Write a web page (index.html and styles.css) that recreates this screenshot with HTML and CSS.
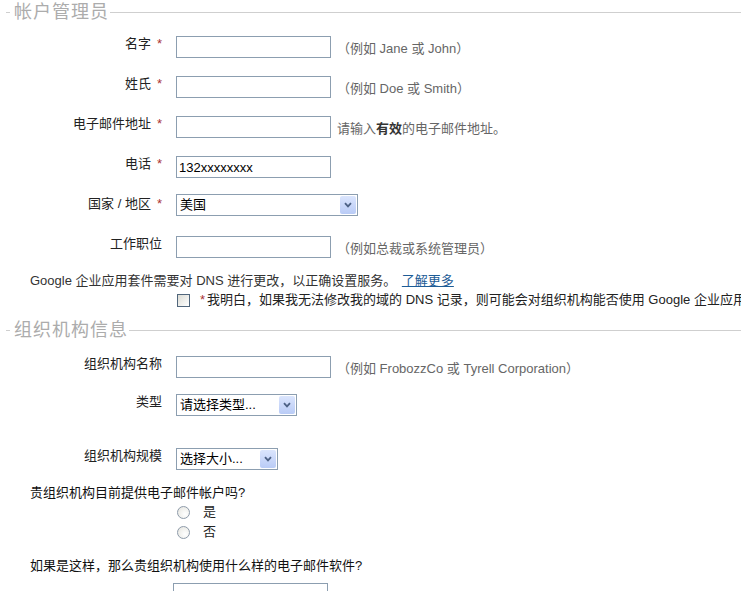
FILE: index.html
```html
<!DOCTYPE html>
<html lang="zh-CN">
<head>
  <meta charset="UTF-8">
  <title>帐户管理员</title>
  <link rel="stylesheet" href="styles.css">
</head>
<body>
  <div class="page">

    <h2 class="section-title"><span>帐户管理员</span></h2>
    <div class="fields">
      <div class="row">
        <label class="label" for="first-name">名字<span class="req">*</span></label>
        <input class="text" id="first-name" type="text">
        <span class="hint">（例如 Jane 或 John）</span>
      </div>
      <div class="row">
        <label class="label" for="last-name">姓氏<span class="req">*</span></label>
        <input class="text" id="last-name" type="text">
        <span class="hint">（例如 Doe 或 Smith）</span>
      </div>
      <div class="row">
        <label class="label" for="email">电子邮件地址<span class="req">*</span></label>
        <input class="text" id="email" type="text">
        <span class="hint">请输入<b>有效</b>的电子邮件地址。</span>
      </div>
      <div class="row">
        <label class="label" for="phone">电话<span class="req">*</span></label>
        <input class="text" id="phone" type="text" value="132xxxxxxxx">
      </div>
      <div class="row">
        <label class="label" for="country">国家 / 地区<span class="req">*</span></label>
        <span class="select select-country">
          <select id="country"><option>美国</option></select>
          <span class="select-btn"><svg width="8" height="6" viewBox="0 0 8 6"><path d="M1 1.2 L4 4.4 L7 1.2" /></svg></span>
        </span>
      </div>
      <div class="row row-last">
        <label class="label" for="job">工作职位</label>
        <input class="text" id="job" type="text">
        <span class="hint">（例如总裁或系统管理员）</span>
      </div>
    </div>

    <p class="note">Google 企业应用套件需要对 DNS 进行更改，以正确设置服务。 <a href="#">了解更多</a></p>
    <div class="agree">
      <input class="check" type="checkbox" id="agree">
      <label for="agree"><span class="req">*</span>我明白，如果我无法修改我的域的 DNS 记录，则可能会对组织机构能否使用 Google 企业应用套件服务造成影响。</label>
    </div>

    <h2 class="section-title section-org"><span>组织机构信息</span></h2>
    <div class="fields fields-org">
      <div class="row row-name">
        <label class="label" for="org-name">组织机构名称</label>
        <input class="text" id="org-name" type="text">
        <span class="hint">（例如 FrobozzCo 或 Tyrell Corporation）</span>
      </div>
      <div class="row row-type">
        <label class="label" for="org-type">类型</label>
        <span class="select select-type">
          <select id="org-type"><option>请选择类型...</option></select>
          <span class="select-btn"><svg width="8" height="6" viewBox="0 0 8 6"><path d="M1 1.2 L4 4.4 L7 1.2" /></svg></span>
        </span>
      </div>
      <div class="row row-size">
        <label class="label" for="org-size">组织机构规模</label>
        <span class="select select-size">
          <select id="org-size"><option>选择大小...</option></select>
          <span class="select-btn"><svg width="8" height="6" viewBox="0 0 8 6"><path d="M1 1.2 L4 4.4 L7 1.2" /></svg></span>
        </span>
      </div>
    </div>

    <p class="question">贵组织机构目前提供电子邮件帐户吗?</p>
    <ul class="choices">
      <li><input class="radio" type="radio" name="has-mail" id="mail-yes"><label for="mail-yes">是</label></li>
      <li><input class="radio" type="radio" name="has-mail" id="mail-no"><label for="mail-no">否</label></li>
    </ul>

    <p class="question question-software">如果是这样，那么贵组织机构使用什么样的电子邮件软件?</p>
    <input class="text text-software" type="text">

  </div>
</body>
</html>
```

FILE: styles.css
```css
body {
  margin: 0;
  background: #fff;
  color: #222;
  font-family: "Liberation Sans", "Noto Sans CJK SC", sans-serif;
  font-size: 13px;
  line-height: 16px;
}

.page {
  height: 591px;
  overflow: hidden;
}

/* section headings: short rule, grey title, long rule */
.section-title {
  display: flex;
  align-items: center;
  height: 24px;
  margin: 0;
  color: #acacac;
  font-size: 18px;
  font-weight: normal;
  letter-spacing: 1px;
}
.section-title::before {
  content: "";
  width: 4px;
  margin-left: 6px;
  border-top: 1px solid #cfcfcf;
}
.section-title::after {
  content: "";
  flex: 1;
  border-top: 1px solid #cfcfcf;
}
.section-title span {
  padding: 0 1px 0 4px;
  line-height: 24px;
}
.section-org {
  margin-top: 10px;
}

.fields {
  padding-top: 12px;
}
.fields-org {
  padding-top: 14px;
}

.row {
  display: flex;
  align-items: flex-start;
  height: 22px;
  margin-bottom: 18px;
}
.row-last {
  margin-bottom: 15px;
}
.row-name {
  margin-bottom: 16px;
}
.row-type {
  margin-bottom: 32px;
}
.row-size {
  margin-bottom: 15px;
}

.label {
  flex: none;
  width: 162px;
  text-align: right;
  color: #222;
}
.req {
  margin-left: 6px;
  color: #a33;
}

.text {
  flex: none;
  box-sizing: border-box;
  width: 155px;
  height: 22px;
  margin: 0 0 0 14px;
  padding: 0 2px;
  border: 1px solid #8c9eb0;
  background: #fff;
  color: #000;
  font: inherit;
}
.hint {
  margin: 5px 0 0 6px;
  color: #666;
}
.hint b {
  color: #333;
}

/* xp style select with the blue arrow button */
.select {
  position: relative;
  flex: none;
  height: 22px;
  margin: -2px 0 0 14px;
}
.select select {
  appearance: none;
  box-sizing: border-box;
  width: 100%;
  height: 22px;
  margin: 0;
  padding: 0 0 0 3px;
  border: 1px solid #8c9eb0;
  border-radius: 0;
  background: #fff;
  color: #000;
  font: inherit;
}
.select-btn {
  position: absolute;
  top: 2px;
  right: 2px;
  width: 16px;
  height: 18px;
  display: flex;
  align-items: center;
  justify-content: center;
  border-radius: 2px;
  background: linear-gradient(#dbe5fd, #b9cbf6);
  pointer-events: none;
}
.select-btn path {
  fill: none;
  stroke: #4d6185;
  stroke-width: 1.8;
}
.select-country {
  width: 182px;
}
.select-type {
  width: 121px;
  margin-top: 0;
}
.select-size {
  width: 102px;
  margin-top: 0;
}

.note {
  margin: 0 0 0 30px;
  color: #333;
  white-space: nowrap;
}
.note a {
  margin-left: 2px;
  color: #1d5c96;
}

.agree {
  display: flex;
  align-items: center;
  height: 16px;
  margin: 3px 0 0 177px;
  white-space: nowrap;
  color: #222;
}
.agree .req {
  margin: 0 2px 0 0;
}
.check {
  appearance: none;
  flex: none;
  width: 13px;
  height: 13px;
  margin: 0 10px 0 0;
  border: 1px solid #51667c;
  background: linear-gradient(135deg, #dcdcd5, #fff);
}

.question {
  margin: 0 0 0 30px;
  color: #111;
}
.question-software {
  margin-top: 16px;
}

.choices {
  margin: 1px 0 0 177px;
  padding: 0;
  list-style-type: none;
}
.choices li {
  display: flex;
  align-items: center;
  height: 20px;
}
.radio {
  appearance: none;
  flex: none;
  width: 13px;
  height: 13px;
  margin: 0 13px 0 0;
  border: 1px solid #8e9baa;
  border-radius: 50%;
  background: radial-gradient(circle at 65% 65%, #fff, #e4e4de);
}

.text-software {
  display: block;
  margin: 9px 0 0 173px;
}
```
